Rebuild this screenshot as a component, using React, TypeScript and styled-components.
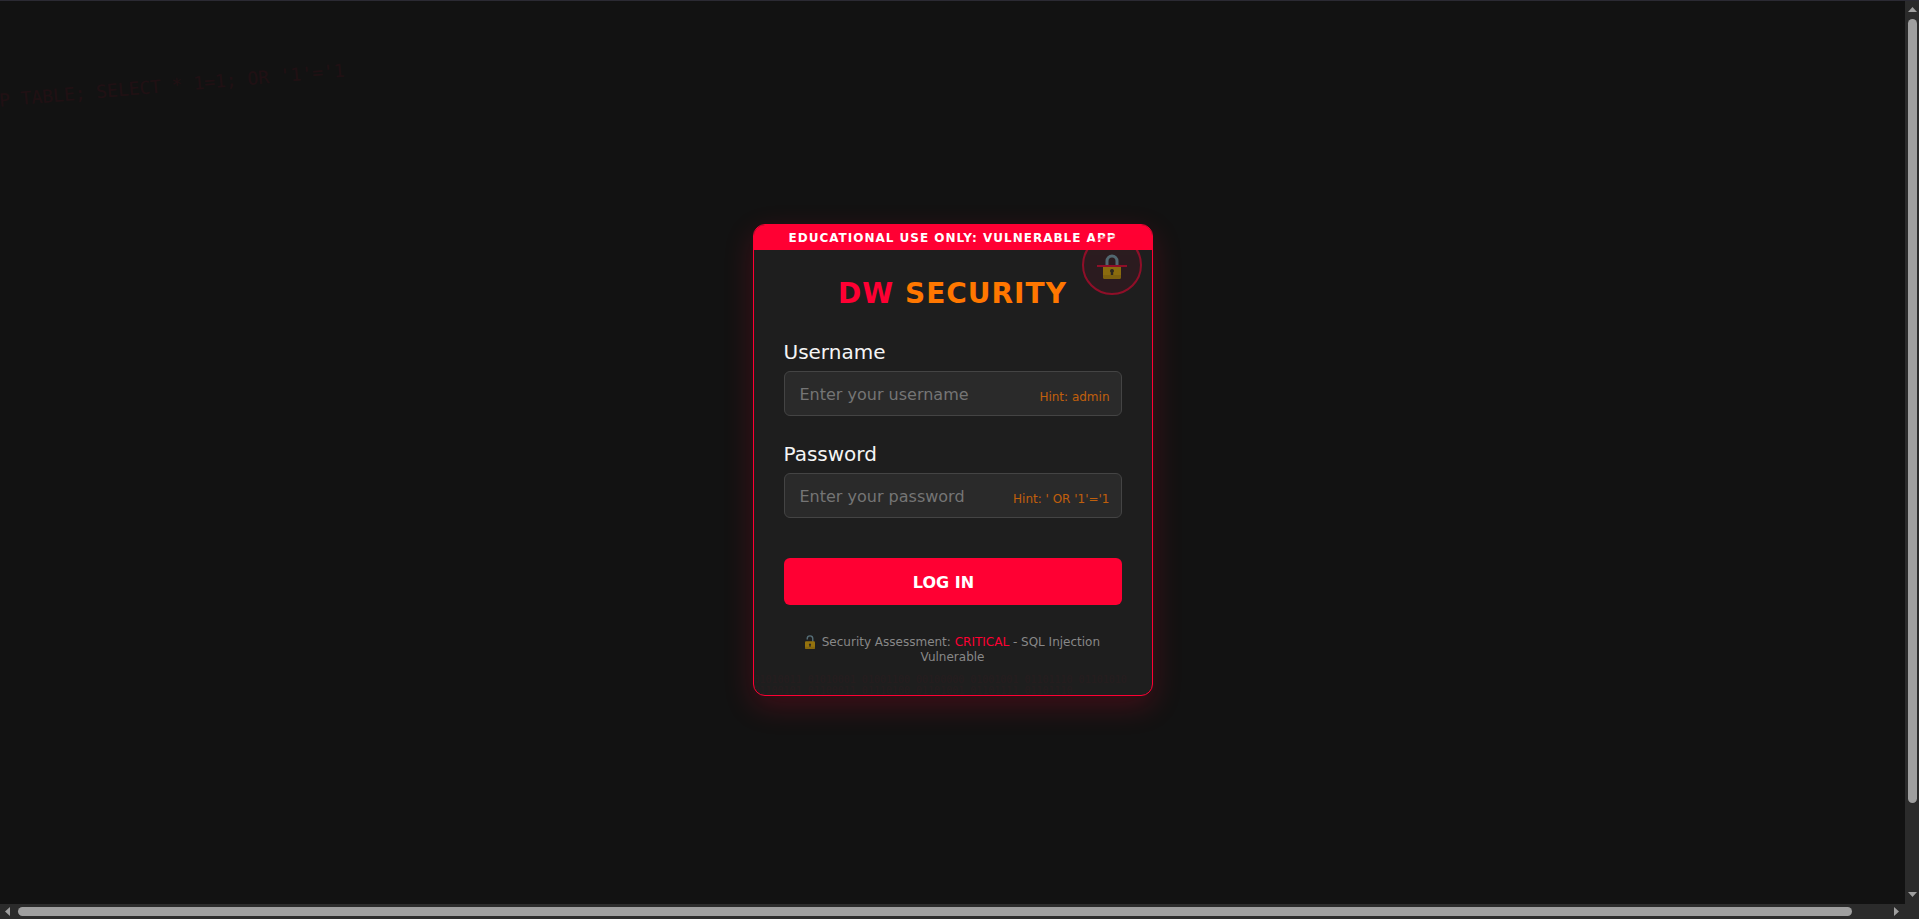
import React from 'react';
import styled, { createGlobalStyle } from 'styled-components';

const RED = '#ff0033';
const ORANGE = '#ff7700';

const GlobalStyle = createGlobalStyle`
  *, *::before, *::after { box-sizing: border-box; }
  body {
    margin: 0;
    background: #121212;
    color: #f5f5f5;
    font-family: Verdana, "DejaVu Sans", sans-serif;
  }
`;

const Frame = styled.div`
  display: grid;
  grid-template-columns: minmax(0, 1fr) 14px;
  grid-template-rows: minmax(0, 1fr) 15px;
  height: 100vh;
  background: #2b2b2b;
  border-top: 1px solid #2b2a33;
  overflow: hidden;
`;

const Page = styled.main`
  position: relative;
  display: flex;
  align-items: center;
  justify-content: center;
  padding-top: 15px;
  background: #121212;
  overflow: hidden;
`;

const Backdrop = styled.div`
  position: absolute;
  top: 74px;
  left: -34px;
  color: ${RED};
  opacity: 0.06;
  font: 18px/24px "DejaVu Sans Mono", monospace;
  white-space: pre;
  transform: rotate(-5deg);
  pointer-events: none;
`;

const Card = styled.section`
  position: relative;
  width: 400px;
  padding: 52px 30px 30px;
  background: #1e1e1e;
  border: 1px solid ${RED};
  border-radius: 12px;
  box-shadow: 0 10px 30px rgba(255, 0, 51, 0.2);
  overflow: hidden;
`;

const Banner = styled.p`
  position: absolute;
  top: 0;
  left: 0;
  right: 0;
  margin: 0;
  padding: 6px 0 4px;
  background: ${RED};
  color: #fff;
  font-size: 12px;
  line-height: 15px;
  font-weight: bold;
  letter-spacing: 1px;
  text-align: center;
`;

const Badge = styled.div`
  position: absolute;
  top: 10px;
  right: 10px;
  display: flex;
  width: 60px;
  height: 60px;
  align-items: center;
  justify-content: center;
  border: 2px solid ${RED};
  border-radius: 50%;
  background: rgba(255, 0, 51, 0.12);
  opacity: 0.5;

  svg { margin-top: 2px; }

  &::after {
    content: "";
    position: absolute;
    top: 28px;
    left: 13px;
    width: 30px;
    height: 2px;
    background: ${RED};
  }
`;

const Title = styled.h1`
  margin: 0 0 30px;
  color: ${RED};
  font-size: 28px;
  line-height: 33px;
  letter-spacing: 1px;
  text-align: center;
  span { color: ${ORANGE}; }
`;

const Field = styled.div`
  position: relative;
  margin-bottom: 26px;
`;

const Label = styled.label`
  display: block;
  margin-bottom: 7px;
  font-size: 20px;
  line-height: 24px;
`;

const TextInput = styled.input`
  display: block;
  width: 100%;
  height: 45px;
  padding: 2px 15px 0;
  background: #2a2a2a;
  border: 1px solid #444;
  border-radius: 6px;
  color: #f5f5f5;
  font: inherit;
  font-size: 16px;
  &::placeholder { color: #757575; }
`;

const Hint = styled.span`
  position: absolute;
  right: 12px;
  bottom: 12px;
  color: ${ORANGE};
  font-size: 12px;
  line-height: 14px;
  opacity: 0.7;
`;

const LoginButton = styled.button`
  display: block;
  width: 100%;
  height: 47px;
  margin-top: 40px;
  padding: 2px 18px 0 0;
  background: ${RED};
  border: 0;
  border-radius: 6px;
  color: #fff;
  font: inherit;
  font-size: 16px;
  font-weight: bold;
`;

const Status = styled.p`
  margin: 30px 0 0;
  color: #888;
  font-size: 12px;
  line-height: 15px;
  text-align: center;
  em { color: ${RED}; font-style: normal; }
  svg { opacity: 0.55; vertical-align: -3px; margin-right: 3px; }
`;

const Binary = styled.div`
  position: absolute;
  left: 0;
  right: 0;
  bottom: -1px;
  color: ${RED};
  opacity: 0.03;
  font: 10px/11px "DejaVu Sans Mono", monospace;
`;

const Track = styled.div<{ $horizontal?: boolean }>`
  display: flex;
  flex-direction: ${(p) => (p.$horizontal ? 'row' : 'column')};
  align-items: center;
  gap: ${(p) => (p.$horizontal ? '8px' : '7px')};
  padding: ${(p) => (p.$horizontal ? '0 6px 0 5px' : '6px 0 7px')};
`;

const Rail = styled.div<{ $horizontal?: boolean }>`
  display: flex;
  flex: 1;
  flex-direction: ${(p) => (p.$horizontal ? 'row' : 'column')};
`;

const Thumb = styled.div<{ $horizontal?: boolean }>`
  flex: 0 0 ${(p) => (p.$horizontal ? '98.2%' : '90.5%')};
  width: 9px;
  height: 9px;
  border-radius: 5px;
  background: #9f9f9f;
`;

function Lock({ width, height, open }: { width: number; height: number; open?: boolean }) {
  return (
    <svg width={width} height={height} viewBox="0 0 18 25" aria-hidden="true">
      <path
        d={open ? 'M14 12V6.500a5 5 0 0 0-10 0V8' : 'M4 13V7a5 5 0 0 1 10 0v6'}
        fill="none"
        stroke="#84b0c1"
        strokeWidth={open ? 2.5 : 3}
      />
      <rect y="11" width="18" height="14" rx="2" fill="#f5b800" />
      <path d="M0 21h18v2a2 2 0 0 1-2 2H2a2 2 0 0 1-2-2z" fill="#dba100" />
      <path d="M9 15a2 2 0 0 1 1.200 3.600V21H7.800v-2.400A2 2 0 0 1 9 15z" fill="#3b3020" />
    </svg>
  );
}

function Arrow({ d, w, h }: { d: string; w: number; h: number }) {
  return (
    <svg width={w} height={h} viewBox={`0 0 ${w} ${h}`} aria-hidden="true">
      <path d={d} fill="#9f9f9f" />
    </svg>
  );
}

export default function App() {
  return (
    <>
      <GlobalStyle />
      <Frame>
        <Page>
          <Backdrop aria-hidden="true">{"DROP TABLE; SELECT * 1=1; OR '1'='1"}</Backdrop>
          <Card>
            <Banner>EDUCATIONAL USE ONLY: VULNERABLE APP</Banner>
            <Badge>
              <Lock width={18} height={25} />
            </Badge>
            <Title>DW <span>SECURITY</span></Title>
            <form onSubmit={(e) => e.preventDefault()}>
              <Field>
                <Label htmlFor="username">Username</Label>
                <TextInput id="username" placeholder="Enter your username" />
                <Hint>Hint: admin</Hint>
              </Field>
              <Field>
                <Label htmlFor="password">Password</Label>
                <TextInput id="password" type="password" placeholder="Enter your password" />
                <Hint>Hint: ' OR '1'='1</Hint>
              </Field>
              <LoginButton type="submit">LOG IN</LoginButton>
            </form>
            <Status>
              <Lock width={10} height={14} open /> Security Assessment: <em>CRITICAL</em> - SQL Injection Vulnerable
            </Status>
            <Binary aria-hidden="true">
              01010011 01010001 01001100 00100000 01001001 01101110 01101010 01100101 01100011 01110100 01101001 01101111 01101110
            </Binary>
          </Card>
        </Page>
        <Track>
          <Arrow d="M0 5L4.500 0L9 5z" w={9} h={5} />
          <Rail><Thumb /></Rail>
          <Arrow d="M0 0H9L4.500 5z" w={9} h={5} />
        </Track>
        <Track $horizontal>
          <Arrow d="M5 0V9L0 4.500z" w={5} h={9} />
          <Rail $horizontal><Thumb $horizontal /></Rail>
          <Arrow d="M0 0L5 4.500L0 9z" w={5} h={9} />
        </Track>
      </Frame>
    </>
  );
}
